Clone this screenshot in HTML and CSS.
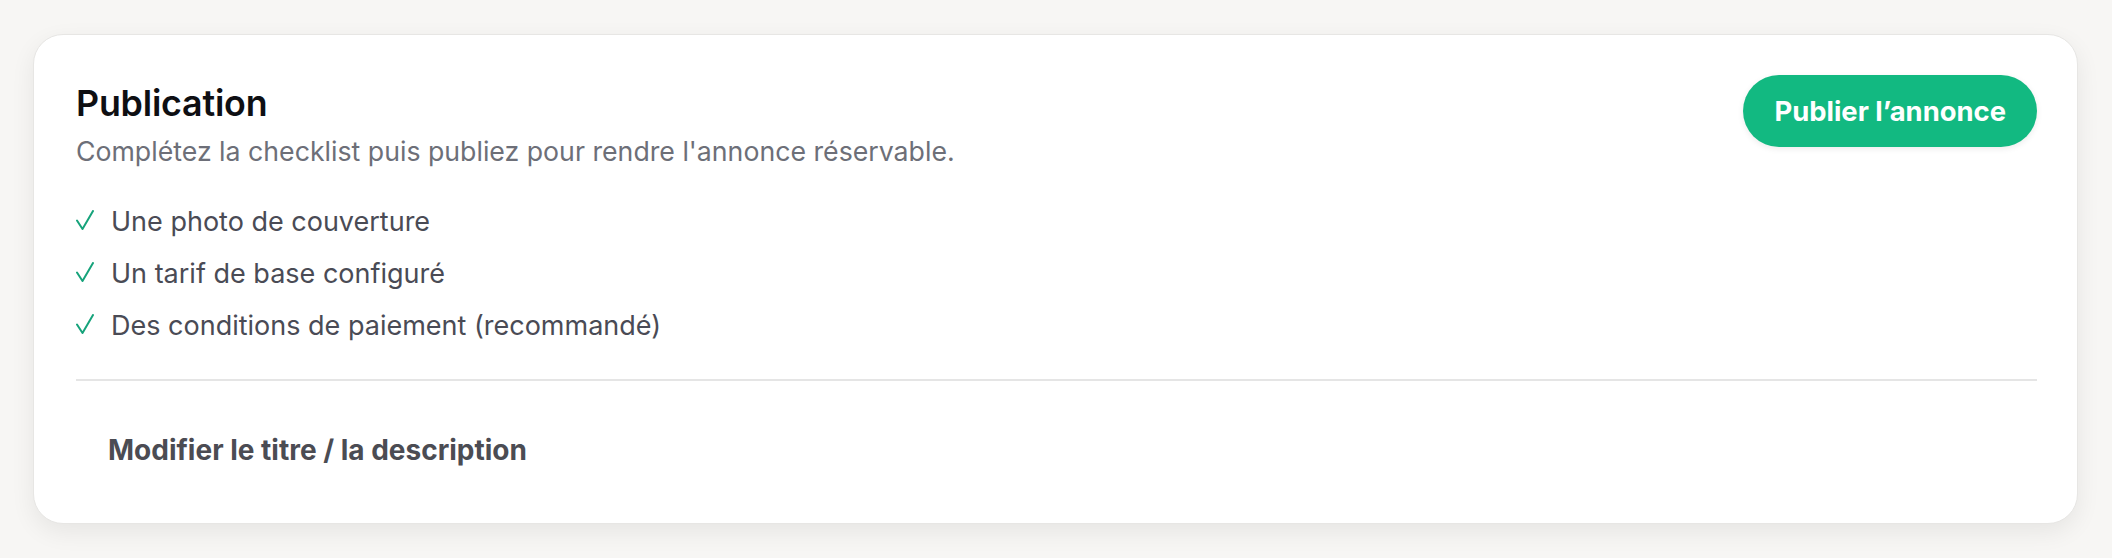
FILE: index.html
```html
<!DOCTYPE html>
<html lang="fr">
<head>
<meta charset="utf-8">
<title>Publication</title>
<link rel="stylesheet" href="styles.css">
</head>
<body>
<section class="card">
  <div class="header">
    <div class="intro">
      <h2 class="title">Publication</h2>
      <p class="subtitle">Complétez la checklist puis publiez pour rendre l'annonce réservable.</p>
    </div>
    <button class="publish" type="button">Publier l’annonce</button>
  </div>
  <ul class="checklist">
    <li class="item"><svg class="check" viewBox="0 0 18 20" width="18" height="20"><path d="M1 10.5 L6.5 19 L17 1" fill="none" stroke="#16a37b" stroke-width="2" stroke-linecap="round" stroke-linejoin="round"/></svg><span>Une photo de couverture</span></li>
    <li class="item"><svg class="check" viewBox="0 0 18 20" width="18" height="20"><path d="M1 10.5 L6.5 19 L17 1" fill="none" stroke="#16a37b" stroke-width="2" stroke-linecap="round" stroke-linejoin="round"/></svg><span>Un tarif de base configuré</span></li>
    <li class="item"><svg class="check" viewBox="0 0 18 20" width="18" height="20"><path d="M1 10.5 L6.5 19 L17 1" fill="none" stroke="#16a37b" stroke-width="2" stroke-linecap="round" stroke-linejoin="round"/></svg><span>Des conditions de paiement (recommandé)</span></li>
  </ul>
  <div class="footer">
    <button class="ghost" type="button">Modifier le titre / la description</button>
  </div>
</section>
</body>
</html>
```
FILE: styles.css
```css
* { box-sizing: border-box; }
html, body { margin: 0; }
body {
  background: #f7f6f4;
  padding: 34px 34px 34px 33px;
  font-family: Inter, Roboto, "Liberation Sans", sans-serif;
}
.card {
  background: #fff;
  border: 1px solid #e7e6e4;
  border-radius: 30px;
  box-shadow: 0 8px 24px rgba(0, 0, 0, 0.07);
  padding: 40px 40px 39px 42px;
  display: flex;
  flex-direction: column;
}
.header {
  display: flex;
  justify-content: space-between;
  align-items: flex-start;
}
.intro { padding-top: 8px; }
.title {
  margin: 0;
  font-size: 35.8px;
  line-height: 40px;
  font-weight: 600;
  color: #0e0f13;
  letter-spacing: -0.2px;
}
.subtitle {
  margin: 10px 0 0;
  font-size: 26.7px;
  line-height: 36px;
  color: #6d6f78;
}
.publish {
  height: 72px;
  padding: 0 31px;
  border: none;
  border-radius: 36px;
  background: #12b981;
  color: #fff;
  font-family: inherit;
  font-size: 27.4px;
  font-weight: 700;
  box-shadow: 0 2px 6px rgba(0, 0, 0, 0.08);
}
.checklist {
  list-style: none;
  margin: 33px 0 0;
  padding: 0 0 33px;
  display: flex;
  flex-direction: column;
  gap: 12px;
  border-bottom: 2px solid #e5e5e5;
}
.item {
  display: flex;
  align-items: center;
  gap: 17px;
  font-size: 27px;
  line-height: 40px;
  color: #4a4b55;
}
.check { flex: none; margin-top: -4px; }
.footer { padding-top: 35px; }
.ghost {
  border: none;
  background: transparent;
  padding: 16px 32px;
  font-family: inherit;
  font-size: 28px;
  line-height: 36px;
  font-weight: 700;
  color: #4b4c53;
}
```
